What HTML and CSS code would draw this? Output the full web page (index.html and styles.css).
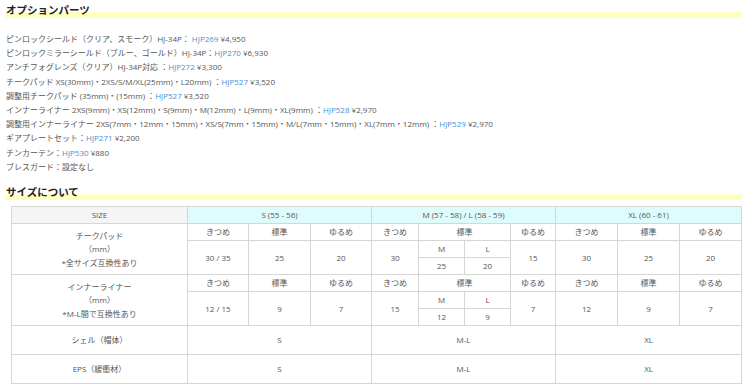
FILE: index.html
```html
<!DOCTYPE html>
<html lang="ja">
<head>
<meta charset="utf-8">
<link rel="stylesheet" href="styles.css">
</head>
<body>
<h2 class="sec-title sec-first">オプションパーツ</h2>
<div class="parts">
  <p>ピンロックシールド（クリア、スモーク）HJ-34P： <a>HJP269</a> ¥4,950</p>
  <p>ピンロックミラーシールド（ブルー、ゴールド）HJ-34P：<a>HJP270</a> ¥6,930</p>
  <p>アンチフォグレンズ（クリア）HJ-34P対応 ：<a>HJP272</a> ¥3,300</p>
  <p>チークパッド XS(30mm)・2XS/S/M/XL(25mm)・L20mm) ：<a>HJP527</a> ¥3,520</p>
  <p>調整用チークパッド (35mm)・(15mm) ：<a>HJP527</a> ¥3,520</p>
  <p>インナーライナー 2XS(9mm)・XS(12mm)・S(9mm)・M(12mm)・L(9mm)・XL(9mm) ：<a>HJP528</a> ¥2,970</p>
  <p>調整用インナーライナー 2XS(7mm・12mm・15mm)・XS/S(7mm・15mm)・M/L(7mm・15mm)・XL(7mm・12mm) ：<a>HJP529</a> ¥2,970</p>
  <p>ギアプレートセット：<a>HJP271</a> ¥2,200</p>
  <p>チンカーテン：<a>HJP530</a> ¥880</p>
  <p>ブレスガード：設定なし</p>
</div>
<h2 class="sec-title sec-second">サイズについて</h2>
<table class="size-table">
  <colgroup>
    <col class="c-label"><col class="c-s"><col class="c-s2"><col class="c-s">
    <col class="c-m1"><col class="c-m2"><col class="c-m2"><col class="c-m3">
    <col class="c-xl"><col class="c-xl"><col class="c-xl">
  </colgroup>
  <tr class="r-head">
    <th class="th-size">SIZE</th>
    <th class="th-grp" colspan="3">S (55 - 56)</th>
    <th class="th-grp" colspan="4">M (57 - 58) / L (58 - 59)</th>
    <th class="th-grp" colspan="3">XL (60 - 61)</th>
  </tr>
  <tr class="r-sub">
    <td rowspan="3" class="label">チークパッド<br>（mm）<br>*全サイズ互換性あり</td>
    <td>きつめ</td><td>標準</td><td>ゆるめ</td>
    <td>きつめ</td><td colspan="2">標準</td><td>ゆるめ</td>
    <td>きつめ</td><td>標準</td><td>ゆるめ</td>
  </tr>
  <tr class="r-sub">
    <td rowspan="2">30 / 35</td><td rowspan="2">25</td><td rowspan="2">20</td>
    <td rowspan="2">30</td><td>M</td><td>L</td><td rowspan="2">15</td>
    <td rowspan="2">30</td><td rowspan="2">25</td><td rowspan="2">20</td>
  </tr>
  <tr class="r-sub">
    <td>25</td><td>20</td>
  </tr>
  <tr class="r-sub">
    <td rowspan="3" class="label">インナーライナー<br>（mm）<br>*M-L間で互換性あり</td>
    <td>きつめ</td><td>標準</td><td>ゆるめ</td>
    <td>きつめ</td><td colspan="2">標準</td><td>ゆるめ</td>
    <td>きつめ</td><td>標準</td><td>ゆるめ</td>
  </tr>
  <tr class="r-sub">
    <td rowspan="2">12 / 15</td><td rowspan="2">9</td><td rowspan="2">7</td>
    <td rowspan="2">15</td><td>M</td><td>L</td><td rowspan="2">7</td>
    <td rowspan="2">12</td><td rowspan="2">9</td><td rowspan="2">7</td>
  </tr>
  <tr class="r-sub">
    <td>12</td><td>9</td>
  </tr>
  <tr class="r-big">
    <td class="label">シェル（帽体）</td>
    <td colspan="3">S</td><td colspan="4">M-L</td><td colspan="3">XL</td>
  </tr>
  <tr class="r-big">
    <td class="label">EPS（緩衝材）</td>
    <td colspan="3">S</td><td colspan="4">M-L</td><td colspan="3">XL</td>
  </tr>
</table>
</body>
</html>
```

FILE: styles.css
```css
html, body {
  margin: 0;
  padding: 0;
  background: #fff;
}
body {
  font-family: "Open Sans", "Noto Sans CJK JP", sans-serif;
  color: #555;
  font-size: 8px;
}
.sec-title {
  margin: 0 8px 0 5px;
  padding-left: 1px;
  height: 18px;
  line-height: 18px;
  font-size: 10.5px;
  font-weight: bold;
  color: #222;
  background: linear-gradient(to bottom, transparent 11px, #ffffc4 11px, #ffffc4 17px, transparent 17px);
}
.sec-first { margin-top: 1px; }
.sec-second { margin-top: 9px; }
.parts {
  margin-top: 13px;
  padding-left: 6px;
}
.parts p {
  margin: 0;
  line-height: 14.2px;
  white-space: nowrap;
}
.parts a {
  color: #4b8fd6;
  text-decoration: none;
}
.size-table {
  margin: 5px 0 0 11px;
  border-collapse: collapse;
  table-layout: fixed;
  width: 730px;
  font-size: 8px;
  color: #555;
}
.c-label { width: 176px; }
.c-s { width: 61px; }
.c-s2 { width: 62px; }
.c-m1 { width: 47px; }
.c-m2 { width: 46px; }
.c-m3 { width: 45px; }
.c-xl { width: 62px; }
.size-table th, .size-table td {
  border: 1px solid #d6d6d6;
  text-align: center;
  vertical-align: middle;
  padding: 0;
  font-weight: normal;
  line-height: 13.5px;
}
.r-head { height: 17px; }
.r-sub { height: 17px; }
.r-big { height: 29px; }
.th-size { background: #f5f5f5; }
.th-grp { background: #dffcfd; }
```
